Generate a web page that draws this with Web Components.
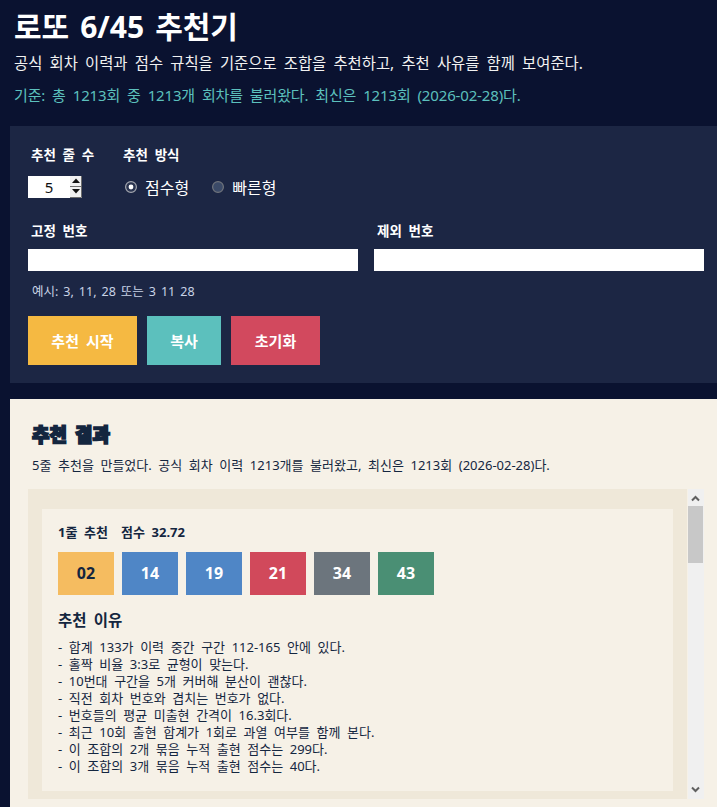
<!DOCTYPE html>
<html lang="ko">
<head>
<meta charset="utf-8">
<title>로또 6/45 추천기</title>
<style>
    html, body { margin: 0; height: 100%; overflow: hidden; }
    body {
        background: #0a1230;
        color: #fff;
        font-family: "Noto Sans", "Noto Sans CJK KR", sans-serif;
        word-spacing: 0.2em;
        width: 717px;
    }
</style>
</head>
<body>
<lotto-app></lotto-app>

<template id="lotto-app-template">
    <style>
        :host { display: block; width: 732px; }
        .panels { display: flex; flex-direction: column; gap: 16px; padding-left: 10px; }
        .row { display: flex; gap: 26px; }
        .cols { display: grid; grid-template-columns: 330px 330px; column-gap: 16px; margin-top: 23px; }
        .cols form-field { --label-gap: 8px; }
        .hint { font-size: 12.5px; line-height: 16px; word-spacing: 0.14em; color: #c9d3e6; margin: 13px 0 0 4px; }
        .buttons { display: flex; gap: 10px; margin-top: 16px; }
        .modes { display: flex; gap: 23px; height: 22px; align-items: center; padding-left: 5px; }
        .summary { margin: 0 0 0 4px; font-size: 13px; line-height: 16px; color: #14263f; white-space: nowrap; }
        .result-title { margin: 0 0 10px 4px; font-size: 19px; line-height: 24px; font-weight: 900; color: #14263f; -webkit-text-stroke: 1.7px #14263f; }
        .list { margin-top: 16px; display: flex; width: 676px; height: 310px; gap: 1px; }
        .list-inner { width: 659px; box-sizing: border-box; background: #efe8d9; padding: 20px 14px 8px; overflow: hidden; }
    </style>
    <page-header></page-header>
    <div class="panels">
        <form-panel>
            <div class="row">
                <form-field label="추천 줄 수"><spin-box value="5"></spin-box></form-field>
                <form-field label="추천 방식">
                    <div class="modes">
                        <radio-item checked>점수형</radio-item>
                        <radio-item>빠른형</radio-item>
                    </div>
                </form-field>
            </div>
            <div class="cols">
                <form-field label="고정 번호"><text-box></text-box></form-field>
                <form-field label="제외 번호"><text-box></text-box></form-field>
            </div>
            <p class="hint">예시: 3, 11, 28 또는 3 11 28</p>
            <div class="buttons">
                <action-button color="#f5b942" width="109">추천 시작</action-button>
                <action-button color="#5cc0bd" width="74">복사</action-button>
                <action-button color="#d2495e" width="89">초기화</action-button>
            </div>
        </form-panel>
        <result-panel>
            <h2 class="result-title">추천 결과</h2>
            <p class="summary">5줄 추천을 만들었다. 공식 회차 이력 1213개를 불러왔고, 최신은 1213회 (2026-02-28)다.</p>
            <div class="list">
                <div class="list-inner">
                    <result-card title="1줄 추천 &nbsp;점수 32.72" numbers="02,14,19,21,34,43">
                        <li>합계 133가 이력 중간 구간 112-165 안에 있다.</li>
                        <li>홀짝 비율 3:3로 균형이 맞는다.</li>
                        <li>10번대 구간을 5개 커버해 분산이 괜찮다.</li>
                        <li>직전 회차 번호와 겹치는 번호가 없다.</li>
                        <li>번호들의 평균 미출현 간격이 16.3회다.</li>
                        <li>최근 10회 출현 합계가 1회로 과열 여부를 함께 본다.</li>
                        <li>이 조합의 2개 묶음 누적 출현 점수는 299다.</li>
                        <li>이 조합의 3개 묶음 누적 출현 점수는 40다.</li>
                    </result-card>
                </div>
                <scroll-bar></scroll-bar>
            </div>
        </result-panel>
    </div>
</template>

<script>
    // small helper, every element below is just a shadow root with its own style
    const define = function(name, html, init) {
        customElements.define(name, class extends HTMLElement {
            constructor() {
                super();
                this.attachShadow({mode: 'open'}).innerHTML = html;
            }
            connectedCallback() {
                if(init) init(this, this.shadowRoot);
            }
        });
    }

    define('page-header', `
        <style>
            :host { display: block; height: 126px; box-sizing: border-box; padding: 6px 14px 0; }
            h1 { margin: 0; font-size: 30px; line-height: 42px; font-weight: 700; color: #fff; }
            p { margin: 0; font-size: 15.4px; line-height: 22px; white-space: nowrap; }
            .sub { margin-top: 5px; color: #f1f1f1; }
            .src { margin-top: 9px; color: #5cc0bd; font-size: 15px; letter-spacing: -0.15px; }
        </style>
        <h1>로또 6/45 추천기</h1>
        <p class="sub">공식 회차 이력과 점수 규칙을 기준으로 조합을 추천하고, 추천 사유를 함께 보여준다.</p>
        <p class="src">기준: 총 1213회 중 1213개 회차를 불러왔다. 최신은 1213회 (2026-02-28)다.</p>
    `);

    define('form-panel', `
        <style>
            :host { display: block; height: 257px; box-sizing: border-box; background: #1c2644; padding: 19px 18px 0; }
        </style>
        <slot></slot>
    `);

    define('result-panel', `
        <style>
            :host { display: block; height: 420px; box-sizing: border-box; background: #f6f1e7; padding: 24px 18px 0; }
        </style>
        <slot></slot>
    `);

    define('form-field', `
        <style>
            :host { display: block; }
            label { display: block; font-size: 13.5px; line-height: 20px; font-weight: 700; color: #fff; margin: 0 0 var(--label-gap, 11px) 3px; white-space: nowrap; }
        </style>
        <label></label>
        <slot></slot>
    `, function(el, root) {
        root.querySelector('label').textContent = el.getAttribute('label');
    });

    define('spin-box', `
        <style>
            :host { display: flex; width: 54px; height: 22px; background: #fff; }
            .val { width: 42px; text-align: center; font-size: 15px; line-height: 22px; color: #111; }
            .spin { width: 12px; display: block; }
        </style>
        <span class="val"></span>
        <svg class="spin" viewBox="0 0 12 22" width="12" height="22">
            <rect width="12" height="22" fill="#f0f0f0"/>
            <path d="M11.5 0V21.5H0" fill="none" stroke="#6d6d6d"/>
            <path d="M0 10.5H12" stroke="#6d6d6d"/>
            <path d="M6 2.5L10 7H2Z" fill="#111"/>
            <path d="M6 17.5L10 13H2Z" fill="#111"/>
        </svg>
    `, function(el, root) {
        root.querySelector('.val').textContent = el.getAttribute('value');
    });

    define('radio-item', `
        <style>
            :host { display: inline-flex; align-items: center; gap: 8px; font-size: 16px; color: #fff; white-space: nowrap; }
            svg { display: block; }
        </style>
        <svg width="12" height="12" viewBox="0 0 12 12">
            <circle class="ring" cx="6" cy="6" r="5.4" fill="#3b4a68" stroke="#70747c" stroke-width="1.2"/>
            <circle class="dot" cx="6" cy="6" r="2.4" fill="#fff"/>
        </svg>
        <slot></slot>
    `, function(el, root) {
        const ring = root.querySelector('.ring');
        if(el.hasAttribute('checked')) {
            ring.setAttribute('fill', '#2a3450');
            ring.setAttribute('stroke', '#a5a8b0');
        } else {
            root.querySelector('.dot').remove();
        }
    });

    define('text-box', `
        <style>
            :host { display: block; height: 22px; background: #fff; }
        </style>
    `);

    define('action-button', `
        <style>
            :host { display: block; }
            button { display: block; height: 49px; border: 0; padding: 0; font: inherit; word-spacing: inherit; font-size: 15px; font-weight: 700; color: #fff; }
        </style>
        <button><slot></slot></button>
    `, function(el, root) {
        const btn = root.querySelector('button');
        btn.style.width = el.getAttribute('width') + 'px';
        btn.style.background = el.getAttribute('color');
    });

    define('lotto-ball', `
        <style>
            :host { display: block; width: 56px; height: 43px; font-size: 16px; line-height: 43px; font-weight: 700; text-align: center; color: #fff; }
        </style>
        <slot></slot>
    `);

    define('result-card', `
        <style>
            :host { display: block; background: #f6f1e7; padding: 14px 16px; height: 282px; box-sizing: border-box; }
            .head { font-size: 13px; line-height: 18px; font-weight: 700; color: #14263f; white-space: nowrap; }
            .balls { display: flex; gap: 8px; margin-top: 11px; }
            h3 { margin: 14px 0 0; font-size: 15.5px; line-height: 22px; font-weight: 700; color: #14263f; }
            .why { margin-top: 8px; }
            ::slotted(li) { display: block; font-size: 13px; line-height: 17px; color: #14263f; white-space: nowrap; }
            ::slotted(li)::before { content: "- "; }
        </style>
        <div class="head"></div>
        <div class="balls"></div>
        <h3>추천 이유</h3>
        <div class="why"><slot></slot></div>
    `, function(el, root) {
        root.querySelector('.head').textContent = el.getAttribute('title');
        const balls = root.querySelector('.balls');
        el.getAttribute('numbers').split(',').forEach(function(num) {
            const ball = document.createElement('lotto-ball');
            const n = Number(num);
            ball.textContent = num;
            ball.style.background = n < 11 ? '#f5bc60' : n < 21 ? '#4f86c6' : n < 31 ? '#d1495b' : n < 41 ? '#6c757d' : '#4a8f74';
            if(n < 11) ball.style.color = '#14263f';
            balls.appendChild(ball);
        });
    });

    define('scroll-bar', `
        <style>
            :host { display: flex; flex-direction: column; width: 16px; background: #f0f0f0; }
            svg { display: block; flex: none; }
            .track { flex: 1; }
            .thumb { width: 15px; height: 57px; background: #c8c8c8; }
        </style>
        <svg width="16" height="17" viewBox="0 0 16 17"><path d="M4 11.5L7.5 8L11 11.5" fill="none" stroke="#606060" stroke-width="2"/></svg>
        <div class="track"><div class="thumb"></div></div>
        <svg width="16" height="17" viewBox="0 0 16 17"><path d="M4 5.5L7.5 9L11 5.5" fill="none" stroke="#606060" stroke-width="2"/></svg>
    `);

    const appTemplate = document.getElementById('lotto-app-template').content;
    customElements.define('lotto-app', class extends HTMLElement {
        constructor() {
            super();
            this.attachShadow({mode: 'open'}).appendChild(appTemplate.cloneNode(true));
        }
    });
</script>
</body>
</html>
